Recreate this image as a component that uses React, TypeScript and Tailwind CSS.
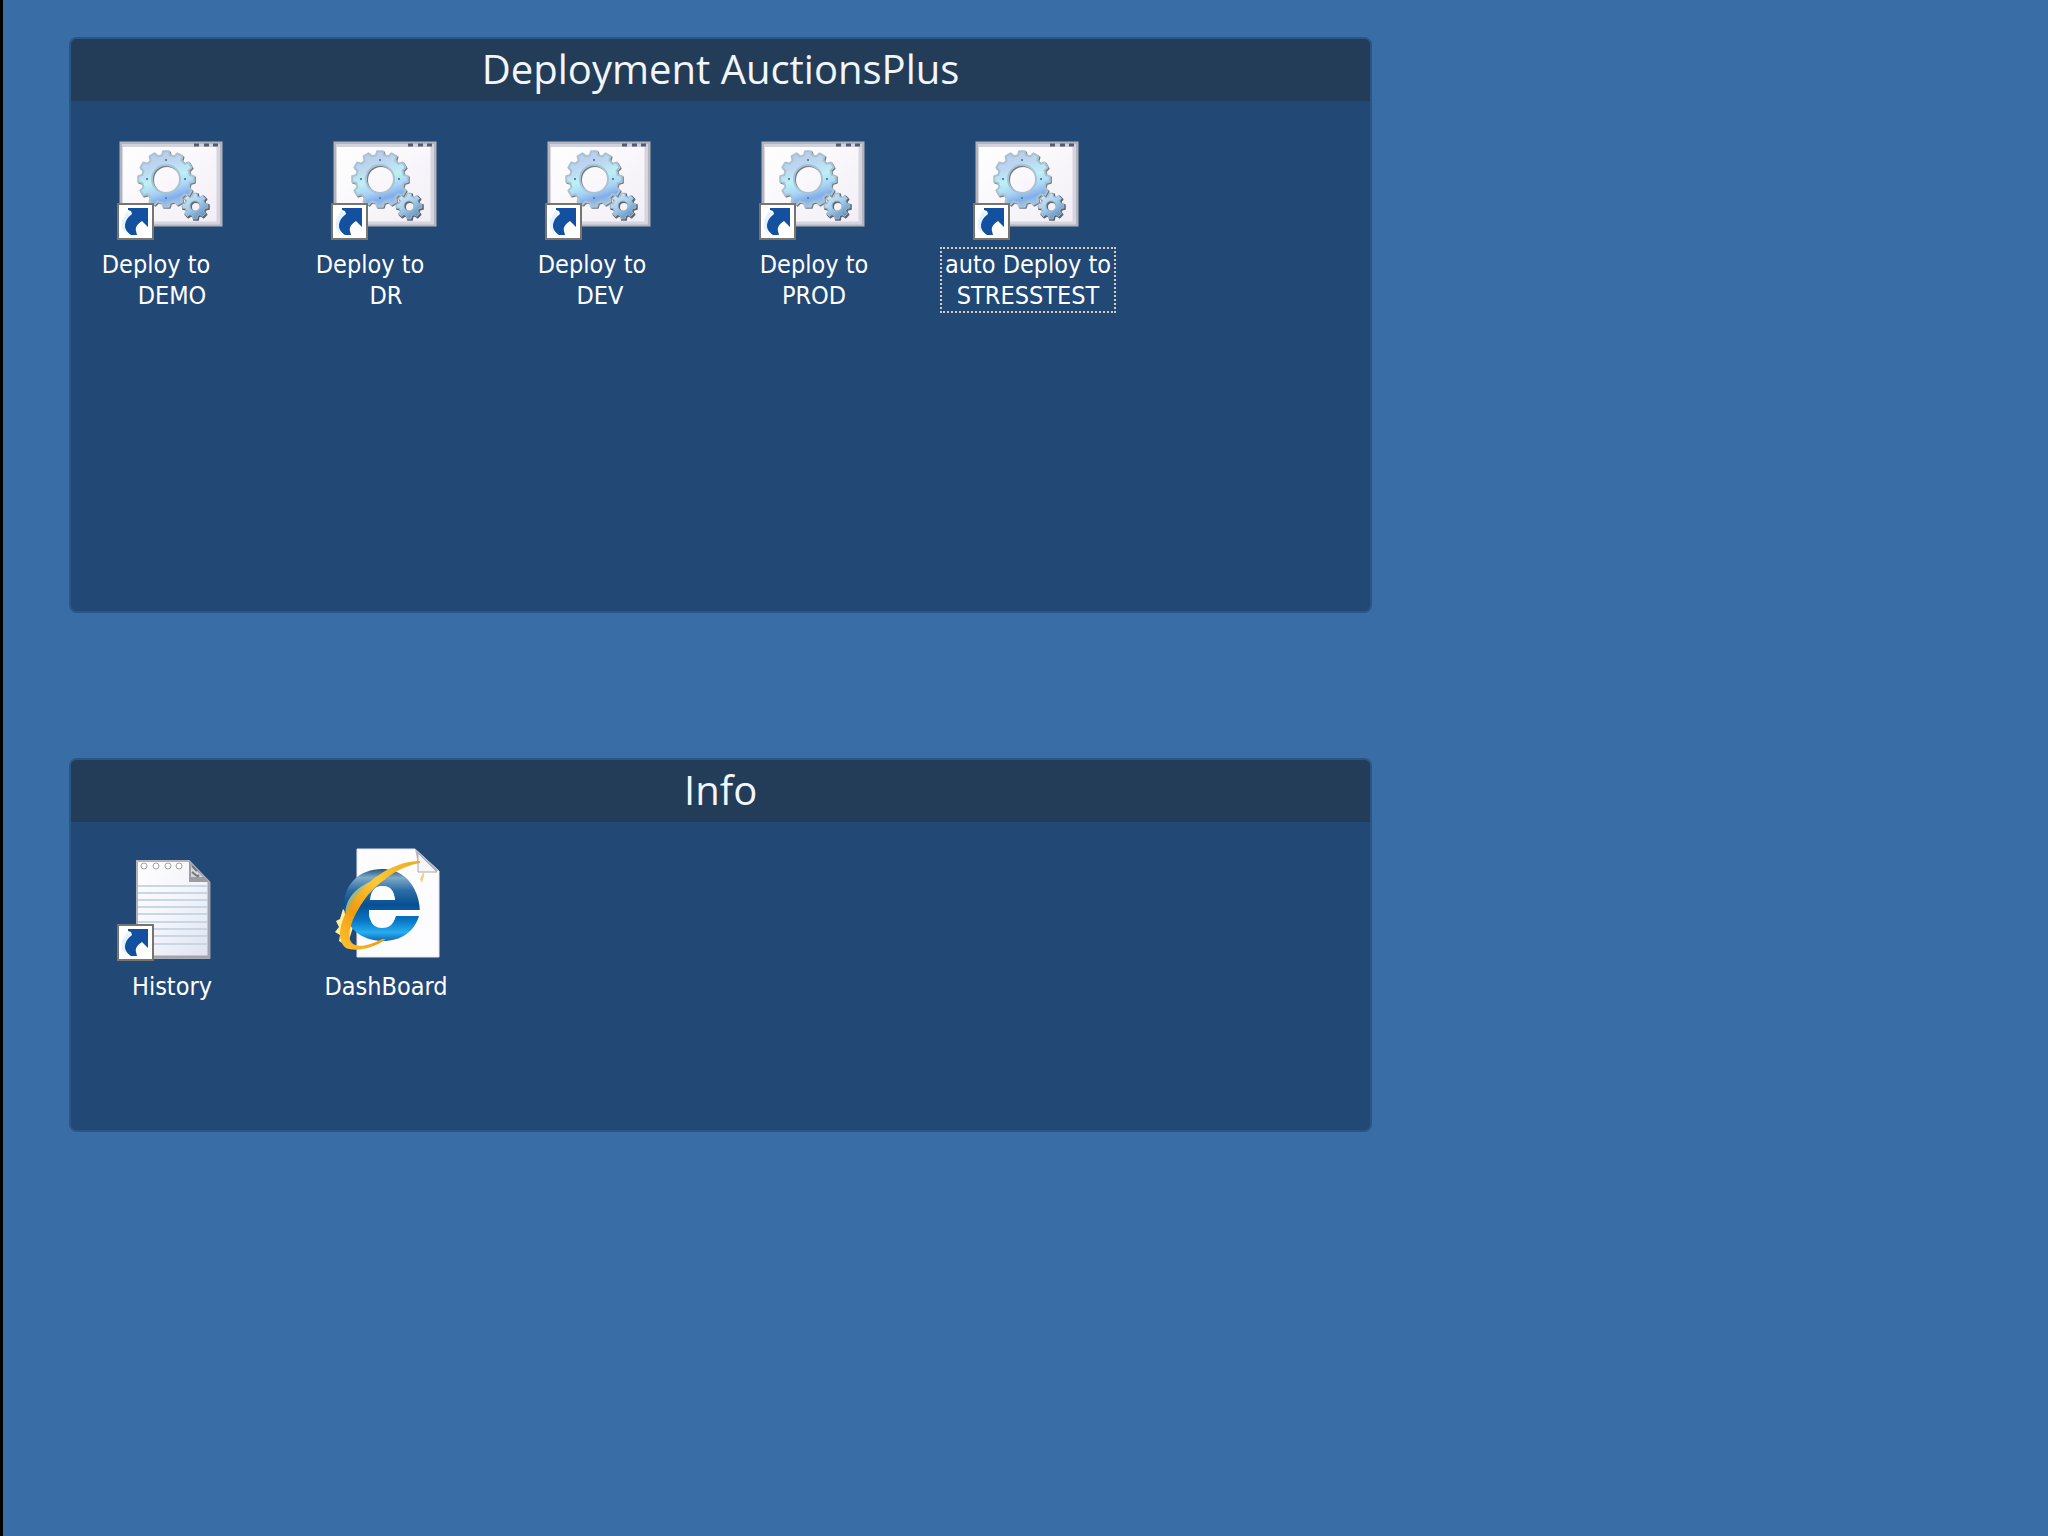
import type { ReactNode } from "react";

function gearPath(cx: number, cy: number, outer: number, inner: number, hole: number, teeth: number) {
  const step = (Math.PI * 2) / teeth;
  const points: string[] = [];
  for (let i = 0; i < teeth; i++) {
    const a = i * step - Math.PI / 2;
    const corners: [number, number][] = [
      [inner, -0.32],
      [outer, -0.2],
      [outer, 0.2],
      [inner, 0.32],
    ];
    corners.forEach(([r, t]) => {
      const x = cx + r * Math.cos(a + t * step);
      const y = cy + r * Math.sin(a + t * step);
      points.push(`${x.toFixed(1)} ${y.toFixed(1)}`);
    });
  }
  return (
    `M${points.join("L")}Z` +
    `M${cx - hole} ${cy}a${hole} ${hole} 0 1 0 ${hole * 2} 0a${hole} ${hole} 0 1 0 ${-hole * 2} 0Z`
  );
}

const bigGear = gearPath(49, 38, 28, 24, 14, 12);
const smallGear = gearPath(78, 65, 13, 10, 5, 8);

function ShortcutArrow({ y }: { y: number }) {
  return (
    <g transform={`translate(0 ${y})`}>
      <rect x="1" y="1" width="35" height="35" fill="#fff" stroke="#78756f" strokeWidth="2" />
      <path d="M10 8L5 17V25L9 31L8 20L14 11Z" fill="#e3f2ff" />
      <path
        d="M11 5H31V24L25 18C20 21 18 25 19 28L20 32H14C11 30 8 27 8 23C8 18 11 14 15 11L14 8L11 7Z"
        fill="#1450a0"
      />
    </g>
  );
}

function BatchIcon() {
  return (
    <svg viewBox="0 0 110 102" className="h-[102px] w-[110px]" aria-hidden="true">
      <defs>
        <linearGradient id="window" x1="0" y1="0" x2="1" y2="1">
          <stop offset="0" stopColor="#ffffff" />
          <stop offset="0.5" stopColor="#f9f7fb" />
          <stop offset="1" stopColor="#f1edf5" />
        </linearGradient>
        <linearGradient id="gear" x1="0.3" y1="0" x2="0.6" y2="1">
          <stop offset="0" stopColor="#b9cbea" />
          <stop offset="0.25" stopColor="#bcd6f1" />
          <stop offset="0.5" stopColor="#bdf0f5" />
          <stop offset="0.7" stopColor="#a8d3f7" />
          <stop offset="0.85" stopColor="#82aeea" />
          <stop offset="1" stopColor="#a9c9e6" />
        </linearGradient>
        <linearGradient id="pinion" x1="0" y1="0" x2="0.7" y2="1">
          <stop offset="0" stopColor="#d9eff6" />
          <stop offset="0.5" stopColor="#abd0ee" />
          <stop offset="1" stopColor="#5e90c0" />
        </linearGradient>
      </defs>
      <rect x="4" y="2" width="100" height="82" fill="url(#window)" stroke="#b4b4bc" strokeWidth="3" />
      <rect x="5" y="3" width="98" height="3" fill="#d2d2dc" />
      <path d="M101 6V82H6" fill="none" stroke="#d6d5df" strokeWidth="3" />
      <path d="M77 4H82M87 4H92M96 4H101" stroke="#555a70" strokeWidth="3" />
      <g fillRule="evenodd" strokeLinejoin="round">
        <path d={bigGear} fill="#6f7882" stroke="#6f7882" strokeWidth="2" transform="translate(1 1)" />
        <path d={bigGear} fill="url(#gear)" stroke="#a9c3d3" strokeWidth="2" />
        <path d="M48 18h2v2h-2zM48 56h2v2h-2zM29 37h2v2h-2zM67 37h2v2h-2z" fill="#5b86a4" />
        <path d={smallGear} fill="#5c6672" stroke="#5c6672" strokeWidth="2" transform="translate(1 1)" />
        <path d={smallGear} fill="url(#pinion)" stroke="#9bb8cb" strokeWidth="1" />
      </g>
      <ShortcutArrow y={62} />
    </svg>
  );
}

const ruledLines = [33, 40, 47, 54, 61, 69, 76, 83, 91];
const rings = [27, 39, 51, 62];

function NotepadIcon() {
  return (
    <svg viewBox="0 0 110 112" className="h-[112px] w-[110px]" aria-hidden="true">
      <defs>
        <linearGradient id="sheet" x1="0" y1="0" x2="1" y2="1">
          <stop offset="0" stopColor="#ffffff" />
          <stop offset="0.5" stopColor="#f4f5fb" />
          <stop offset="1" stopColor="#dfe3f1" />
        </linearGradient>
      </defs>
      <path d="M20 8H72L92 29V105H20Z" fill="url(#sheet)" stroke="#b3b4bb" strokeWidth="2" />
      <path d="M21 104H92V29" fill="none" stroke="#a2a5b0" strokeWidth="3" />
      {ruledLines.map((y) => (
        <path key={y} d={`M21 ${y}H90`} stroke="#c8d7e4" strokeWidth="2" />
      ))}
      {rings.map((x) => (
        <circle key={x} cx={x} cy="13" r="3" fill="#fff" stroke="#a3a3a3" strokeWidth="1" />
      ))}
      <path d="M72 8V29H92Z" fill="#9b9da4" />
      <path d="M74 12V24H86Z" fill="#d5d6dc" />
      <path d="M75 13l5 5M75 19l5 4M80 24l2-2" stroke="#777" strokeWidth="2" />
      <ShortcutArrow y={71} />
    </svg>
  );
}

function ExplorerIcon() {
  return (
    <svg viewBox="0 0 110 120" className="h-[120px] w-[110px]" aria-hidden="true">
      <defs>
        <linearGradient id="globe" x1="0" y1="0" x2="0" y2="1">
          <stop offset="0" stopColor="#24547e" />
          <stop offset="0.12" stopColor="#7fabc9" />
          <stop offset="0.3" stopColor="#2a6ca5" />
          <stop offset="0.5" stopColor="#074f93" />
          <stop offset="0.72" stopColor="#0877c7" />
          <stop offset="0.88" stopColor="#26aef2" />
          <stop offset="1" stopColor="#1565ae" />
        </linearGradient>
        <linearGradient id="orbit" x1="1" y1="0" x2="0" y2="1">
          <stop offset="0" stopColor="#eda91e" />
          <stop offset="0.4" stopColor="#ffc933" />
          <stop offset="0.7" stopColor="#f09a10" />
          <stop offset="1" stopColor="#ffc634" />
        </linearGradient>
      </defs>
      <path d="M26 4H84L108 26V112H26Z" fill="#fdfcfe" stroke="#e6e3ec" strokeWidth="1" />
      <path d="M84 4L108 26H88V23Z" fill="#b9b8bd" />
      <path d="M87 8V27H106Z" fill="#f6f5f7" stroke="#a9a9ae" strokeWidth="1" />
      <path d="M12 64L9 74L5 76L8 82L4 87L9 90L8 96L16 101L24 76Z" fill="#fff0a0" />
      <path
        d="M89 71H64C63 79 59 83 51 83C43 83 39 78 39 70H89Q89 59 86 50C80 33 67 24 51 24C29 24 13 39 13 60C13 82 30 96 52 96C70 96 83 87 88 71ZM39 55C40 45 44 41 51 41C59 41 63 46 64 55Z"
        fill="url(#globe)"
        fillRule="evenodd"
      />
      <path
        d="M40 55C41 46 45 41 52 41C60 41 63 46 64 55ZM38 65H90V71H65C62 80 59 80 52 80C44 80 40 78 38 71Z"
        fill="#fdfcfe"
      />
      <path d="M47 34C25 40 12 56 15 72C22 54 37 43 55 34Z" fill="#e9e46d" opacity="0.65" />
      <path
        d="M89 16C65 16 39 32 23 54C9 74 4 94 15 103C24 107 42 104 55 94L51 94C38 101 26 103 21 98C14 90 22 69 37 50C52 33 70 21 89 18Z"
        fill="url(#orbit)"
      />
      <path d="M93 26C94 30 92 34 91 38L89 34Z" fill="#f3d47a" />
    </svg>
  );
}

interface ShortcutProps {
  icon: ReactNode;
  lines: string[];
  // room taken by the blanks that trail the first word of the file name
  firstLine?: string;
  focused?: boolean;
}

function Shortcut({ icon, lines, firstLine = "", focused = false }: ShortcutProps) {
  return (
    <button type="button" className="flex w-44 flex-col items-center justify-end">
      {icon}
      <span
        className={`mt-1 block w-full border-2 border-dotted text-center font-['DejaVu_Sans_Condensed','DejaVu_Sans',sans-serif] text-[25px] leading-[31px] whitespace-nowrap text-white ${
          focused ? "border-[#d8cdbb]" : "border-transparent"
        }`}
      >
        {lines.map((line, i) => (
          <span key={line} className={`block ${i === 0 ? firstLine : ""}`}>
            {line}
          </span>
        ))}
      </span>
    </button>
  );
}

interface FenceProps {
  title: string;
  className: string;
  children: ReactNode;
}

function Fence({ title, className, children }: FenceProps) {
  return (
    <section className={`overflow-hidden rounded-lg border-2 border-[#2a5585] bg-[#224876] ${className}`}>
      <h2 className="bg-[#233c58] pb-0.5 text-center font-['Open_Sans','Noto_Sans',sans-serif] text-[40px] leading-[60px] text-[#f1f6fb]">
        {title}
      </h2>
      {children}
    </section>
  );
}

export default function App() {
  return (
    <main className="flex min-h-screen flex-col gap-[145px] border-l-3 border-black bg-[#396da5] pt-[37px] pr-[33%] pl-[66px]">
      <Fence title="Deployment AuctionsPlus" className="min-h-[576px]">
        <div className="flex gap-[38px] px-[13px] pt-10">
          <Shortcut icon={<BatchIcon />} lines={["Deploy to", "DEMO"]} firstLine="pr-8" />
          <Shortcut icon={<BatchIcon />} lines={["Deploy to", "DR"]} firstLine="pr-8" />
          <Shortcut icon={<BatchIcon />} lines={["Deploy to", "DEV"]} firstLine="pr-4" />
          <Shortcut icon={<BatchIcon />} lines={["Deploy to", "PROD"]} />
          <Shortcut icon={<BatchIcon />} lines={["auto Deploy to", "STRESSTEST"]} focused />
        </div>
      </Fence>
      <Fence title="Info" className="min-h-[374px]">
        <div className="flex gap-[38px] px-[13px] pt-[23px]">
          <Shortcut icon={<NotepadIcon />} lines={["History"]} />
          <Shortcut icon={<ExplorerIcon />} lines={["DashBoard"]} />
        </div>
      </Fence>
    </main>
  );
}
